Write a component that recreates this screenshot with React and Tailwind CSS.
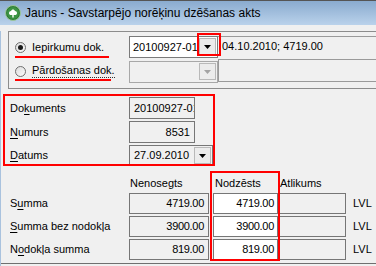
import React from "react";

const TreeIcon = () => (
  <svg width="16" height="16" viewBox="0 0 16 16">
    <circle cx="8" cy="8" r="7.5" fill="#2f7d36" stroke="#9cc79b" strokeWidth="1" />
    <circle cx="8" cy="8" r="6" fill="#3d9444" />
    <path
      d="M4 8.2c0-1.4 1-2.2 2-2.2 .3-1 1.1-1.6 2-1.6s1.7.6 2 1.6c1 0 2 .8 2 2.2 0 1.1-.9 1.8-2 1.8H6c-1.1 0-2-.7-2-1.8z"
      fill="#fff"
    />
    <path d="M7.3 9.5h1.4v3H7.3z" fill="#fff" />
  </svg>
);

const Arrow = ({ disabled }) => (
  <svg width="7" height="4" viewBox="0 0 7 4">
    <path d="M0 0h7L3.5 4z" fill={disabled ? "#a3a3a3" : "#000"} />
  </svg>
);

const DropBtn = ({ disabled }) => (
  <div className="w-[17px] h-[17px] my-[1px] mr-[1px] shrink-0 border border-[#b9b9b9] bg-[#ececec] flex items-center justify-center">
    <Arrow disabled={disabled} />
  </div>
);

const Radio = ({ checked }) => (
  <div className="w-[11px] h-[11px] rounded-full border border-[#6f6f6f] bg-gradient-to-br from-[#dcdcdc] to-[#fbfbfb] flex items-center justify-center">
    {checked && <div className="w-[5px] h-[5px] rounded-full bg-[#1a1a1a]" />}
  </div>
);

const Label = ({ pre, u, post }) => (
  <span className="whitespace-nowrap">
    {pre}
    <span className="underline underline-offset-2">{u}</span>
    {post}
  </span>
);

const Field = ({ className = "", children }) => (
  <div className={`h-[21px] border border-[#767676] flex items-center px-[4px] whitespace-nowrap ${className}`}>{children}</div>
);

const rows = [
  { label: <Label pre="S" u="u" post="mma" />, a: "4719.00", b: "4719.00" },
  { label: <Label pre="" u="S" post="umma bez nodokļa" />, a: "3900.00", b: "3900.00" },
  { label: <Label pre="N" u="o" post="dokļa summa" />, a: "819.00", b: "819.00" },
];

export default function App() {
  return (
    <div className="relative w-[376px] h-[266px] overflow-hidden bg-[#f0f0f0] text-black text-[11px] leading-none font-['Liberation_Sans',sans-serif]">
      {/* title bar */}
      <div className="h-[25px] border-t border-[#555] bg-gradient-to-b from-[#8aabcf] to-[#bad2eb] flex items-center pl-[5px]">
        <TreeIcon />
        <span className="ml-[4px] text-[12px]">Jauns - Savstarpējo norēķinu dzēšanas akts</span>
      </div>

      <div className="h-[241px] border-l border-[#a9c2de]">
        {/* document type frame */}
        <div className="ml-[7px] mt-[6px] h-[58px] border-y border-l border-[#8c8c8c] pt-[4px]">
          <div className="flex h-[24px]">
            <div className="w-[120px] pl-[6px] h-[22px] flex items-center gap-[6px]">
              <Radio checked />
              <span className="whitespace-nowrap">Iepirkumu dok.</span>
            </div>
            <div className="w-[89px] h-[22px] border border-[#7a7a7a] bg-white flex">
              <div className="flex-1 flex items-center pl-[3px] whitespace-nowrap overflow-hidden">20100927-01</div>
              <DropBtn />
            </div>
            <div className="flex-1 border-y border-[#9a9a9a] flex items-center pl-[4px] pb-[3px] whitespace-nowrap">
              04.10.2010; 4719.00
            </div>
          </div>
          <div className="flex h-[22px]">
            <div className="w-[120px] pl-[6px] h-[22px] flex items-center gap-[6px]">
              <Radio />
              <span className="whitespace-nowrap border-b border-dotted border-[#333] pb-[1px]">Pārdošanas dok.</span>
            </div>
            <div className="w-[89px] h-[22px] mt-[1px] border border-[#a8a8a8] flex">
              <div className="flex-1" />
              <DropBtn disabled />
            </div>
            <div className="flex-1 border-l border-b border-[#9a9a9a]" />
          </div>
        </div>

        {/* document details */}
        <div className="mt-[8px] pl-[9px]">
          <div className="flex h-[24px]">
            <div className="w-[119px] h-[22px] flex items-center">
              <Label pre="Do" u="k" post="uments" />
            </div>
            <Field className="w-[66px] h-[22px] overflow-hidden pr-0">20100927-01</Field>
          </div>
          <div className="flex h-[24px]">
            <div className="w-[119px] h-[22px] flex items-center">
              <Label pre="" u="N" post="umurs" />
            </div>
            <Field className="w-[66px] h-[22px] justify-end">8531</Field>
          </div>
          <div className="flex h-[24px]">
            <div className="w-[119px] h-[21px] flex items-center">
              <Label pre="" u="D" post="atums" />
            </div>
            <div className="w-[84px] h-[21px] border border-[#767676] flex items-center pl-[4px]">
              <span className="flex-1 whitespace-nowrap">27.09.2010</span>
              <DropBtn />
            </div>
          </div>
        </div>

        {/* sums */}
        <div className="pl-[9px]">
          <div className="flex h-[24px] pt-[5px] items-center">
            <div className="w-[119px]" />
            <div className="w-[85px] pl-[1px]">Nenosegts</div>
            <div className="w-[66px] pl-[1px]">Nodzēsts</div>
            <div>Atlikums</div>
          </div>
          {rows.map((r, i) => (
            <div key={i} className="flex h-[23px]">
              <div className="w-[119px] h-[21px] flex items-center">{r.label}</div>
              <Field className="w-[80px] justify-end tracking-[-0.3px]">{r.a}</Field>
              <Field className="w-[65px] ml-[4px] bg-white justify-end pr-[3px] tracking-[-0.3px]">{r.b}</Field>
              <Field className="w-[67px] ml-[1px]" />
              <div className="h-[21px] flex items-center pl-[7px]">LVL</div>
            </div>
          ))}
        </div>
        <div className="mt-[1px] border-t border-[#6f6f6f]" />
      </div>

      {/* red annotations */}
      <div className="absolute left-[15px] top-[56px] w-[94px] h-[2px] bg-[#ff0000]" />
      <div className="absolute left-[15px] top-[79px] w-[96px] h-[2px] bg-[#ff0000]" />
      <div className="absolute left-[197px] top-[33px] w-[24px] h-[23px] border-2 border-[#ff0000]" />
      <div className="absolute left-[3px] top-[94px] w-[212px] h-[72px] border-2 border-[#ff0000]" />
      <div className="absolute left-[210px] top-[171px] w-[70px] h-[90px] border-2 border-[#ff0000]" />
    </div>
  );
}
